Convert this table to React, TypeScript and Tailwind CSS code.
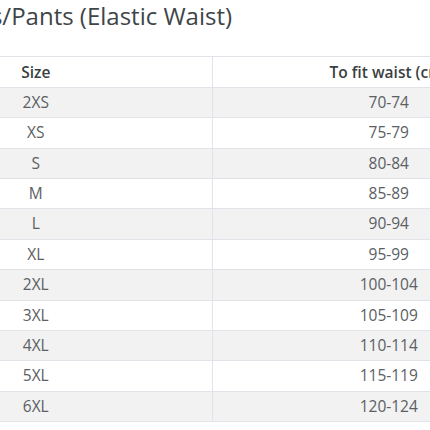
const rows: [string, string][] = [
  ["2XS", "70-74"],
  ["XS", "75-79"],
  ["S", "80-84"],
  ["M", "85-89"],
  ["L", "90-94"],
  ["XL", "95-99"],
  ["2XL", "100-104"],
  ["3XL", "105-109"],
  ["4XL", "110-114"],
  ["5XL", "115-119"],
  ["6XL", "120-124"],
];

export default function App() {
  return (
    <div className="h-[430px] w-[430px] overflow-hidden bg-white font-['Open_Sans',sans-serif]">
      <div className="h-[56px] whitespace-nowrap">
        <h1 className="ml-[-96px] text-[24px] leading-[32px] font-normal text-[#3e4547]">Trousers/Pants (Elastic Waist)</h1>
      </div>
      <div className="ml-[-140px] w-[705px] border-t border-[#e0e4e9] text-[15.5px]">
        <div className="grid h-[31px] grid-cols-2 border-b border-[#e0e4e9] font-semibold text-[#3a3f41]">
          <div className="flex items-center justify-center border-r border-[#e0e4e9] pt-[2px]">Size</div>
          <div className="flex items-center justify-center pt-[2px]">To fit waist (cm)</div>
        </div>
        {rows.map(([size, waist], i) => (
          <div
            key={size}
            className={`grid h-[30.36px] grid-cols-2 border-b border-[#e0e4e9] text-[#5a6063] ${i % 2 === 0 ? "bg-[#f2f2f2]" : "bg-white"}`}
          >
            <div className="flex items-center justify-center border-r border-[#e0e4e9]">{size}</div>
            <div className="flex items-center justify-center">{waist}</div>
          </div>
        ))}
      </div>
    </div>
  );
}
